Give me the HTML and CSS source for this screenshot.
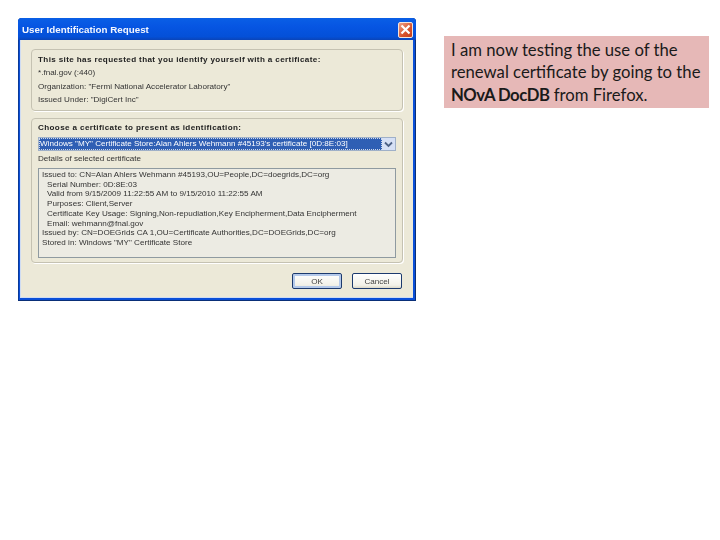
FILE: index.html
```html
<!DOCTYPE html>
<html lang="en">
<head>
<meta charset="utf-8">
<title>User Identification Request</title>
<link rel="stylesheet" href="styles.css">
</head>
<body>
<div class="dialog">
  <div class="titlebar">
    <span class="title">User Identification Request</span>
    <span class="close"><svg width="13" height="13" viewBox="0 0 13 13"><path d="M2.5 2.5l8 8M10.5 2.5l-8 8" stroke="#fff" stroke-width="2.2" fill="none"/></svg></span>
  </div>
  <div class="client">
    <section class="group first">
      <p class="line strong">This site has requested that you identify yourself with a certificate:</p>
      <p class="line">*.fnal.gov (:440)</p>
      <p class="line">Organization: "Fermi National Accelerator Laboratory"</p>
      <p class="line">Issued Under: "DigiCert Inc"</p>
    </section>
    <section class="group second">
      <p class="line strong">Choose a certificate to present as identification:</p>
      <div class="select">
        <span class="select-text">Windows "MY" Certificate Store:Alan Ahlers Wehmann #45193's certificate [0D:8E:03]</span>
        <span class="arrow"><svg width="9" height="7" viewBox="0 0 9 7"><path d="M1 1.5l3.5 3.5L8 1.5" stroke="#4d6185" stroke-width="1.8" fill="none"/></svg></span>
      </div>
      <p class="line details-label">Details of selected certificate</p>
      <div class="details">
        <p class="row">Issued to: CN=Alan Ahlers Wehmann #45193,OU=People,DC=doegrids,DC=org</p>
        <p class="row sub">Serial Number: 0D:8E:03</p>
        <p class="row sub">Valid from 9/15/2009 11:22:55 AM to 9/15/2010 11:22:55 AM</p>
        <p class="row sub">Purposes: Client,Server</p>
        <p class="row sub">Certificate Key Usage: Signing,Non-repudiation,Key Encipherment,Data Encipherment</p>
        <p class="row sub">Email: wehmann@fnal.gov</p>
        <p class="row">Issued by: CN=DOEGrids CA 1,OU=Certificate Authorities,DC=DOEGrids,DC=org</p>
        <p class="row">Stored in: Windows "MY" Certificate Store</p>
      </div>
    </section>
    <div class="buttons">
      <button class="btn default">OK</button>
      <button class="btn">Cancel</button>
    </div>
  </div>
</div>
<aside class="note">I am now testing the use of the renewal certificate by going to the <b>NOvA DocDB</b> from Firefox.</aside>
</body>
</html>
```

FILE: styles.css
```css
* { box-sizing: border-box; }
html, body { margin: 0; padding: 0; }
body {
  width: 720px;
  height: 540px;
  background: #fff;
  padding: 18px 0 0 18px;
  display: flex;
  align-items: flex-start;
  overflow: hidden;
}
p { margin: 0; }
.dialog {
  width: 398px;
  height: 283px;
  flex: none;
  display: flex;
  flex-direction: column;
  background: #0a4fd8;
  padding: 0 3px 3px 2px;
  border-radius: 4px 4px 0 0;
  font-family: "Liberation Sans", sans-serif;
  font-size: 8.1px;
  color: #333;
  box-shadow: inset 0 -1px 0 #0a2f78, inset -1px 0 0 #0a2f78, inset 1px 0 0 #0a3a98;
}
.titlebar {
  height: 22px;
  flex: none;
  display: flex;
  align-items: center;
  justify-content: space-between;
  margin: 0 -3px 0 -2px;
  padding: 0 3px 0 4px;
  background: linear-gradient(#0a5fe6, #0655e2 40%, #0450d8 85%, #0a44b8);
  border-radius: 4px 4px 0 0;
}
.title {
  color: #f4f7ff;
  font-weight: 700;
  font-size: 9.8px;
  filter: blur(0.4px);
}
.close {
  width: 15px;
  height: 16px;
  margin-top: 1px;
  display: flex;
  align-items: center;
  justify-content: center;
  background: linear-gradient(135deg, #eaa088, #d8522c 60%, #c4401c);
  border: 1px solid #f3e4dc;
  border-radius: 2px;
}
.client {
  flex: 1;
  background: #ece9d8;
  padding: 9px 10px 0 11px;
  display: flex;
  flex-direction: column;
  box-shadow: inset 1px -1px 0 #cfdcf2;
}
.group {
  border: 1px solid #c5c2b2;
  border-radius: 4px;
  box-shadow: 1px 1px 0 #fff;
  padding: 0 6px;
  filter: blur(0.4px);
}
.first { height: 62px; padding-top: 3px; margin-bottom: 7px; }
.second { height: 145px; padding-top: 2px; }
.line { line-height: 13px; white-space: nowrap; }
.first .line { line-height: 13.3px; }
.strong { font-weight: 700; letter-spacing: 0.37px; color: #222; }
.select {
  height: 14px;
  margin-top: 3px;
  display: flex;
  border: 1px solid #9fb0c8;
  background: #fff;
}
.select-text {
  flex: 1;
  min-width: 0;
  background: #2f5fb4;
  color: #fff;
  line-height: 12px;
  padding-left: 1px;
  white-space: nowrap;
  overflow: hidden;
  outline: 1px dotted #cfd8e8;
  outline-offset: -1px;
}
.arrow {
  width: 13px;
  flex: none;
  display: flex;
  align-items: center;
  justify-content: center;
  background: #d6e0f5;
}
.details-label { margin-top: 1px; line-height: 14px; }
.details {
  height: 90px;
  margin-top: 2px;
  border: 1px solid #8f9aa0;
  background: #ecebe3;
  padding: 1px 3px;
}
.row { line-height: 9.7px; white-space: nowrap; }
.sub { padding-left: 5px; }
.buttons {
  display: flex;
  justify-content: flex-end;
  gap: 10px;
  margin-top: 10px;
  padding-right: 1px;
}
.btn {
  width: 50px;
  height: 16px;
  padding: 0;
  border: 1px solid #1c3a6e;
  border-radius: 2px;
  background: linear-gradient(#fff, #f2f1e8 80%, #dcd8c8);
  font: 8.1px "Liberation Sans", sans-serif;
  color: #444;
  filter: blur(0.4px);
}
.default { box-shadow: inset 0 0 0 2px #b4c9ea; }
.note {
  width: 265px;
  height: 72px;
  flex: none;
  margin: 18px 0 0 28px;
  padding: 3px 6px 0 7px;
  background: #e6b8b7;
  color: #1a1a1a;
  font-family: Lato, sans-serif;
  font-size: 16.7px;
  line-height: 22.3px;
}
.note b { font-weight: 700; letter-spacing: -0.5px; }
```
